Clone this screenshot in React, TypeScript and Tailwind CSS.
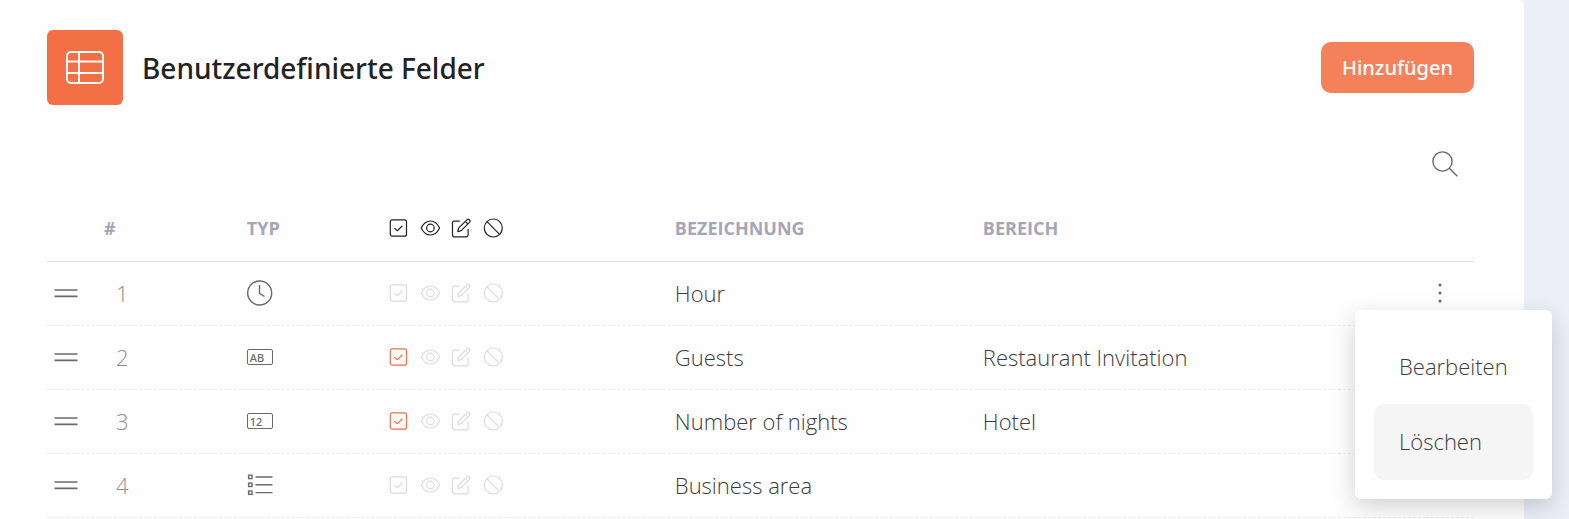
import React from "react";

interface Field {
  id: number;
  type: "time" | "text" | "number" | "list";
  required: boolean;
  name: string;
  area: string;
}

const fields: Field[] = [
  { id: 1, type: "time", required: false, name: "Hour", area: "" },
  { id: 2, type: "text", required: true, name: "Guests", area: "Restaurant Invitation" },
  { id: 3, type: "number", required: true, name: "Number of nights", area: "Hotel" },
  { id: 4, type: "list", required: false, name: "Business area", area: "" },
];

const TableIcon = () => (
  <svg width="38" height="34" viewBox="0 0 38 34" fill="none" stroke="currentColor" strokeWidth="2" aria-hidden="true">
    <rect x="1" y="1" width="36" height="31" rx="4" />
    <path d="M1 10.500h36M1 22h36M13 1v31" />
  </svg>
);

const SearchIcon = () => (
  <svg width="26" height="26" viewBox="0 0 26 26" fill="none" stroke="currentColor" strokeWidth="1.4" aria-hidden="true">
    <circle cx="10.5" cy="10.5" r="9.6" />
    <path d="M17.3 17.3l8 8" />
  </svg>
);

const DragIcon = () => (
  <svg width="24" height="12" viewBox="0 0 24 12" fill="none" stroke="currentColor" strokeWidth="1.7" aria-hidden="true">
    <path d="M0.5 3h23M0.5 9.300h23" />
  </svg>
);

const DotsIcon = () => (
  <svg width="4" height="20" viewBox="0 0 4 20" fill="currentColor" aria-hidden="true">
    <circle cx="2" cy="2" r="1.5" />
    <circle cx="2" cy="10" r="1.5" />
    <circle cx="2" cy="18" r="1.5" />
  </svg>
);

const CheckIcon = ({ className }: { className?: string }) => (
  <svg className={className} width="20" height="20" viewBox="0 0 20 20" fill="none" stroke="currentColor" strokeWidth="1.2" aria-hidden="true">
    <rect x="1.3" y="1.8" width="16.200" height="16.4" rx="2" />
    <path d="M5.500 10.300l2.900 2.300 5-4.800" />
  </svg>
);

const EyeIcon = () => (
  <svg width="20" height="20" viewBox="0 0 20 20" fill="none" stroke="currentColor" strokeWidth="1.2" aria-hidden="true">
    <path d="M1.200 10C3.400 5.500 6.700 3 10.400 3s7.100 2.500 9.200 7c-2.100 4.500-5.500 7-9.200 7S3.400 14.500 1.200 10z" />
    <circle cx="10.400" cy="10" r="3.800" />
  </svg>
);

const EditIcon = () => (
  <svg width="20" height="20" viewBox="0 0 20 20" fill="none" stroke="currentColor" strokeWidth="1.2" strokeLinejoin="round" aria-hidden="true">
    <path d="M8.800 3.200H3.200a1.700 1.700 0 0 0-1.700 1.700v12.200a1.700 1.700 0 0 0 1.700 1.700h12.200a1.700 1.700 0 0 0 1.700-1.700v-6" />
    <path d="M6.800 13.700l.8-3.600 8.300-8.300a1.700 1.700 0 0 1 2.400 0l.2.200a1.700 1.700 0 0 1 0 2.400l-8.300 8.300-3.400 1zM14.300 3.300l2.800 2.800" />
  </svg>
);

const BanIcon = () => (
  <svg width="22" height="20" viewBox="0 0 22 20" fill="none" stroke="currentColor" strokeWidth="1.2" aria-hidden="true">
    <circle cx="11.300" cy="10" r="9" />
    <path d="M5 3.700l12.600 12.600" />
  </svg>
);

const TypeIcon = ({ type }: { type: Field["type"] }) => {
  if (type === "time") {
    return (
      <svg width="26" height="26" viewBox="0 0 26 26" fill="none" stroke="currentColor" strokeWidth="1.4" aria-hidden="true">
        <circle cx="12.700" cy="13" r="12" />
        <path d="M12.500 5v8.300l5 3.200" />
      </svg>
    );
  }
  if (type === "list") {
    return (
      <svg width="26" height="22" viewBox="0 0 26 22" fill="none" stroke="currentColor" strokeWidth="1.400" aria-hidden="true">
        <rect x="1.600" y="1.200" width="3.400" height="3.400" />
        <rect x="1.600" y="9.100" width="3.400" height="3.400" />
        <rect x="1.600" y="17" width="3.400" height="3.400" />
        <path d="M8.500 3h17M8.500 10.800h17M8.500 18.600h17" />
      </svg>
    );
  }
  return (
    <span className="flex h-4 w-[26px] items-center rounded-xs border border-[#6a6a6a] pl-[2px] font-['Noto_Sans'] text-[11px] leading-none font-medium">
      {type === "text" ? "AB" : "12"}
    </span>
  );
};

const ActionMenu = () => (
  <div
    role="menu"
    className="absolute top-12 -right-[78px] z-10 flex w-[197px] flex-col rounded-md bg-white p-[19px] shadow-[0_8px_24px_rgba(0,0,0,0.18)]"
  >
    <button type="button" role="menuitem" className="h-[75px] rounded-[10px] px-[25px] text-left">
      Bearbeiten
    </button>
    <button type="button" role="menuitem" className="h-[76px] rounded-[10px] bg-[#f5f5f5] px-[25px] text-left">
      Löschen
    </button>
  </div>
);

const FieldsTable = () => (
  <table className="w-full table-fixed text-left">
    <colgroup>
      <col className="w-[4%]" />
      <col className="w-[10%]" />
      <col className="w-[10%]" />
      <col className="w-[20%]" />
      <col className="w-[308px]" />
      <col />
      <col className="w-12" />
    </colgroup>
    <thead>
      <tr className="h-[65px] border-b border-[#dedede] text-lg text-[#a5a5b8]">
        <th aria-label="Sortieren" />
        <th className="font-bold">#</th>
        <th className="font-bold">TYP</th>
        <th>
          <span className="flex gap-[11px] text-[#222]">
            <CheckIcon />
            <EyeIcon />
            <EditIcon />
            <BanIcon />
          </span>
        </th>
        <th className="font-bold">BEZEICHNUNG</th>
        <th className="font-bold">BEREICH</th>
        <th aria-label="Aktionen" />
      </tr>
    </thead>
    <tbody>
      {fields.map((field, index) => (
        <tr key={field.id} className="h-16 border-b border-dashed border-[#ececf0] text-[22px] font-light text-[#3c3c3c]">
          <td className="pl-[7px] text-[#6a6a6a]">
            <button type="button" aria-label="Verschieben" className="flex cursor-move">
              <DragIcon />
            </button>
          </td>
          <td className="pl-3 text-[#8f8f8f]">{field.id}</td>
          <td className="text-[#6a6a6a]">
            <TypeIcon type={field.type} />
          </td>
          <td>
            <span className="flex gap-[11px] text-[#dcdcdc]">
              <CheckIcon className={field.required ? "text-[#f36f45]" : undefined} />
              <EyeIcon />
              <EditIcon />
              <BanIcon />
            </span>
          </td>
          <td>{field.name}</td>
          <td>{field.area}</td>
          <td className="relative">
            {index === 0 && (
              <>
                <button type="button" aria-label="Aktionen" className="flex w-7 justify-center text-[#6a6a6a]">
                  <DotsIcon />
                </button>
                <ActionMenu />
              </>
            )}
          </td>
        </tr>
      ))}
    </tbody>
  </table>
);

export default function App() {
  return (
    <div className="min-h-screen bg-[#eceff8] pr-[45px] font-['Open_Sans',sans-serif]">
      <main className="min-h-screen rounded-tr-md bg-[#fefefe] pt-[30px] pr-[50px] pl-[47px]">
        <header className="flex items-center justify-between">
          <div className="flex items-center gap-[19px]">
            <div className="flex h-[75px] w-[76px] items-center justify-center rounded-md bg-[#f36f45] text-white">
              <TableIcon />
            </div>
            <h1 className="font-['Noto_Sans',sans-serif] text-[28px] font-medium text-[#222]">Benutzerdefinierte Felder</h1>
          </div>
          <button
            type="button"
            className="h-[51px] w-[153px] rounded-[10px] bg-[#f5815b] font-['Noto_Sans',sans-serif] text-xl font-medium text-white"
          >
            Hinzufügen
          </button>
        </header>
        <div className="mt-[46px] mb-[19px] flex justify-end pr-4">
          <button type="button" aria-label="Suchen" className="text-[#6a6a6a]">
            <SearchIcon />
          </button>
        </div>
        <FieldsTable />
      </main>
    </div>
  );
}
